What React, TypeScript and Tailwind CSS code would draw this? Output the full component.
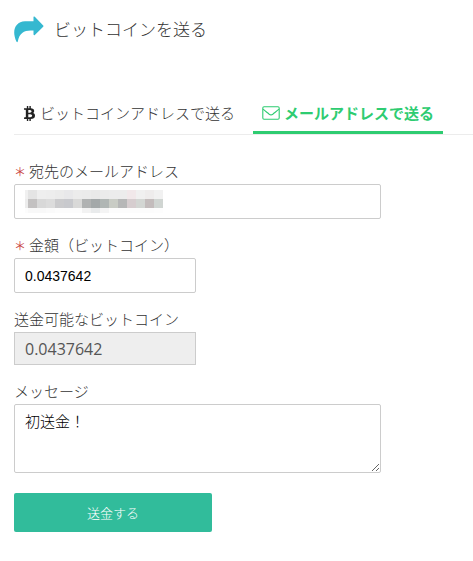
import { useState } from 'react'
import { FaBtc } from 'react-icons/fa'

const MOSAIC = [
  ['#f0f0f0', '#e4e4e4', '#eeeeee', '#ededed', '#ebebeb', '#e8e8ea', '#ececec', '#ebebeb', '#e9e9e9', '#ebebeb', '#ececec', '#ececec', '#f1e8ea', '#f0f0f0', '#eeecec', '#f1f1f1'],
  ['#ececec', '#c3c1c1', '#d8d8d8', '#dcdcdc', '#cbcbcd', '#c8c9cd', '#d9d9d8', '#b0b2b2', '#a3a8a9', '#b0b6b4', '#c9ccc5', '#b6b7b7', '#d6cdcf', '#d3d6d3', '#c3bcbc', '#d0d5d2'],
  ['#fcfcfc', '#f8f8f8', '#f8f8f8', '#fafafa', '#fcfcfc', '#fcfcfc', '#fcfcfc', '#f2f2f2', '#e9ebec', '#f4f4f4', '#fcfcfc', '#fcfcfc', '#fcfcfc', '#fcfcfc', '#fcfcfc', '#fdfdfd'],
]

function ShareArrow() {
  return (
    <svg viewBox="0 0 30 27" className="h-[27px] w-[30px] shrink-0" fill="#35b8d0" aria-hidden="true">
      <path d="M19.5 0.8 Q20 0 20.8 0.8 L29.2 9.4 Q29.8 10 29.2 10.7 L20.8 19 Q20 19.6 19.5 18.6 V14.5 C11 13.8 5.5 16 3.8 25.5 Q3.2 27 2.4 25.6 C-2.5 15 1 5.8 11 5.2 H19.5 Z" />
    </svg>
  )
}

function EnvelopeIcon() {
  return (
    <svg viewBox="0 0 18 14" className="h-[14px] w-[18px] shrink-0" fill="none" stroke="currentColor" strokeWidth="1.1" aria-hidden="true">
      <rect x="0.8" y="0.8" width="16.4" height="12.4" rx="1.2" />
      <path d="M1 3.2 C3 5 5 6.4 7.2 8.2 Q9 9.6 10.8 8.2 C13 6.4 15 5 17 3.2" />
    </svg>
  )
}

function MaskedAddress() {
  return (
    <svg
      viewBox="0 0 138 23"
      className="pointer-events-none absolute top-[6px] left-[11px] h-[23px] w-[138px]"
      shapeRendering="crispEdges"
      aria-hidden="true"
    >
      {MOSAIC.map((row, r) =>
        row.map((color, c) => (
          <rect
            key={`${r}-${c}`}
            x={c === 0 ? 0 : 3 + (c - 1) * 9}
            y={r * 9}
            width={c === 0 ? 3 : 9}
            height={r === 2 ? 5 : 9}
            fill={color}
          />
        ))
      )}
    </svg>
  )
}

function Required() {
  return (
    <span className="mr-[3px] text-[12px] leading-none font-normal text-[#c9453f]" aria-hidden="true">
      ＊
    </span>
  )
}

export default function App() {
  const [email, setEmail] = useState('')
  const [amount, setAmount] = useState('0.0437642')
  const [message, setMessage] = useState('初送金！')

  return (
    <main className="bg-white pt-4 pb-7 pl-[14px] font-['Open_Sans','Noto_Sans_CJK_JP',sans-serif] text-[15px] leading-5 font-light text-[#333]">
      <h1 className="flex items-center gap-[10px] text-[17px] leading-6">
        <ShareArrow />
        ビットコインを送る
      </h1>

      <nav className="mt-[52px] flex border-b border-[#ececec]">
        <a href="#address" className="flex items-center gap-1 px-[9px] pt-2 pb-[11px]">
          <FaBtc className="h-[15px] w-[13px] shrink-0 text-[#222]" />
          <span className="whitespace-nowrap">ビットコインアドレスで送る</span>
        </a>
        <a
          href="#email"
          aria-current="page"
          className="ml-[9px] flex items-center gap-1 border-b-3 border-[#2ecc71] px-[9px] pt-2 pb-2 font-bold text-[#2ecc71]"
        >
          <EnvelopeIcon />
          <span className="whitespace-nowrap">メールアドレスで送る</span>
        </a>
      </nav>

      <form className="mt-[26px] mr-[14px] flex flex-col" onSubmit={(e) => e.preventDefault()}>
        <label htmlFor="email">
          <Required />
          宛先のメールアドレス
        </label>
        <div className="relative mt-[3px] w-full max-w-[367px]">
          <input
            id="email"
            type="email"
            value={email}
            onChange={(e) => setEmail(e.target.value)}
            className="block h-[35px] w-full rounded-xs border border-[#ccc] px-[10px]"
          />
          <MaskedAddress />
        </div>

        <label htmlFor="amount" className="mt-4">
          <Required />
          金額（ビットコイン）
        </label>
        <input
          id="amount"
          type="text"
          value={amount}
          onChange={(e) => setAmount(e.target.value)}
          className="mt-[3px] h-[35px] w-[182px] rounded-xs border border-[#ccc] px-[10px] font-['Liberation_Sans',sans-serif] text-[14px] font-normal text-black"
        />

        <label htmlFor="available" className="mt-4">
          送金可能なビットコイン
        </label>
        <input
          id="available"
          type="text"
          readOnly
          value="0.0437642"
          className="mt-[3px] h-[33px] w-[182px] border border-[#ccc] bg-[#eee] px-[10px] text-[16px] font-normal text-[#555]"
        />

        <label htmlFor="message" className="mt-4">
          メッセージ
        </label>
        <textarea
          id="message"
          value={message}
          onChange={(e) => setMessage(e.target.value)}
          className="mt-[3px] block h-[69px] w-full max-w-[367px] resize rounded-xs border border-[#ccc] px-[10px] py-[6px] text-black"
        />

        <button type="submit" className="mt-5 h-[39px] w-[198px] rounded-xs bg-[#31bc9b] text-[13px] text-white">
          送金する
        </button>
      </form>
    </main>
  )
}
